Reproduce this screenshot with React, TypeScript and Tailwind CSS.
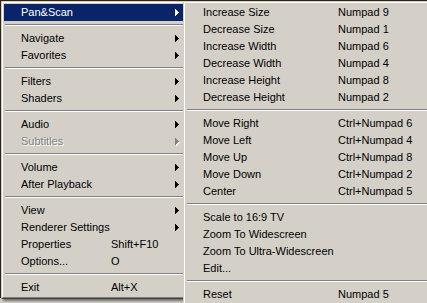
import React from "react";

type Item =
  | { sep: true }
  | {
      sep?: false;
      label: string;
      keys?: string;
      sub?: boolean;
      active?: boolean;
      disabled?: boolean;
    };

const MAIN: Item[] = [
  { label: "Pan&Scan", sub: true, active: true },
  { sep: true },
  { label: "Navigate", sub: true },
  { label: "Favorites", sub: true },
  { sep: true },
  { label: "Filters", sub: true },
  { label: "Shaders", sub: true },
  { sep: true },
  { label: "Audio", sub: true },
  { label: "Subtitles", sub: true, disabled: true },
  { sep: true },
  { label: "Volume", sub: true },
  { label: "After Playback", sub: true },
  { sep: true },
  { label: "View", sub: true },
  { label: "Renderer Settings", sub: true },
  { label: "Properties", keys: "Shift+F10" },
  { label: "Options...", keys: "O" },
  { sep: true },
  { label: "Exit", keys: "Alt+X" },
];

const PANSCAN: Item[] = [
  { label: "Increase Size", keys: "Numpad 9" },
  { label: "Decrease Size", keys: "Numpad 1" },
  { label: "Increase Width", keys: "Numpad 6" },
  { label: "Decrease Width", keys: "Numpad 4" },
  { label: "Increase Height", keys: "Numpad 8" },
  { label: "Decrease Height", keys: "Numpad 2" },
  { sep: true },
  { label: "Move Right", keys: "Ctrl+Numpad 6" },
  { label: "Move Left", keys: "Ctrl+Numpad 4" },
  { label: "Move Up", keys: "Ctrl+Numpad 8" },
  { label: "Move Down", keys: "Ctrl+Numpad 2" },
  { label: "Center", keys: "Ctrl+Numpad 5" },
  { sep: true },
  { label: "Scale to 16:9 TV" },
  { label: "Zoom To Widescreen" },
  { label: "Zoom To Ultra-Widescreen" },
  { label: "Edit..." },
  { sep: true },
  { label: "Reset", keys: "Numpad 5" },
];

// pixel triangle, like the classic submenu arrow
function Arrow({ color }: { color: string }) {
  return (
    <svg width="4" height="7" viewBox="0 0 4 7" shapeRendering="crispEdges">
      <rect x="0" y="0" width="1" height="7" fill={color} />
      <rect x="1" y="1" width="1" height="5" fill={color} />
      <rect x="2" y="2" width="1" height="3" fill={color} />
      <rect x="3" y="3" width="1" height="1" fill={color} />
    </svg>
  );
}

function Menu({ items, labelW }: { items: Item[]; labelW: string }) {
  return (
    <div className="border border-t-[#d4d0c8] border-l-[#d4d0c8] border-b-[#404040] border-r-[#404040] bg-[#d4d0c8]">
      <div className="border border-t-white border-l-white border-b-[#808080] border-r-[#808080] p-px">
        {items.map((it, i) => {
          if (it.sep) {
            return (
              <div key={i} className="h-[9px] pt-[3px] pl-px">
                <div className="h-px bg-[#808080]" />
                <div className="h-px bg-white" />
              </div>
            );
          }
          const text = it.active
            ? "text-white"
            : it.disabled
              ? "text-[#808080] [text-shadow:1px_1px_0_#ffffff]"
              : "text-black";
          return (
            <div
              key={i}
              className={`flex h-[17px] items-center pl-[17px] pr-[4px] leading-[17px] ${
                it.active ? "bg-[#0a246a]" : ""
              } ${text}`}
            >
              <span className={`${labelW} shrink-0 whitespace-nowrap`}>{it.label}</span>
              <span className="flex-1 whitespace-nowrap">{it.keys}</span>
              {it.sub && (
                <span className="relative flex items-center">
                  {it.disabled && (
                    <span className="absolute left-px top-px flex">
                      <Arrow color="#ffffff" />
                    </span>
                  )}
                  <span className="relative flex">
                    <Arrow color={it.active ? "#ffffff" : it.disabled ? "#808080" : "#000000"} />
                  </span>
                </span>
              )}
            </div>
          );
        })}
      </div>
    </div>
  );
}

export default function App() {
  return (
    <div className="relative h-[303px] w-[427px] overflow-hidden bg-[#2e2510] font-['Liberation_Sans',Arial,sans-serif] text-[11px]">
      <div className="flex h-full flex-col">
        <div className="flex-1" />
        <div className="h-[5px] bg-[#d4d0c8]" />
      </div>
      <div className="absolute left-px top-px w-[185px] shadow-[2px_2px_2px_rgba(0,0,0,0.45)]">
        <Menu items={MAIN} labelW="w-[90px]" />
      </div>
      <div className="absolute left-[183px] top-px w-[262px]">
        <Menu items={PANSCAN} labelW="w-[135px]" />
      </div>
    </div>
  );
}
